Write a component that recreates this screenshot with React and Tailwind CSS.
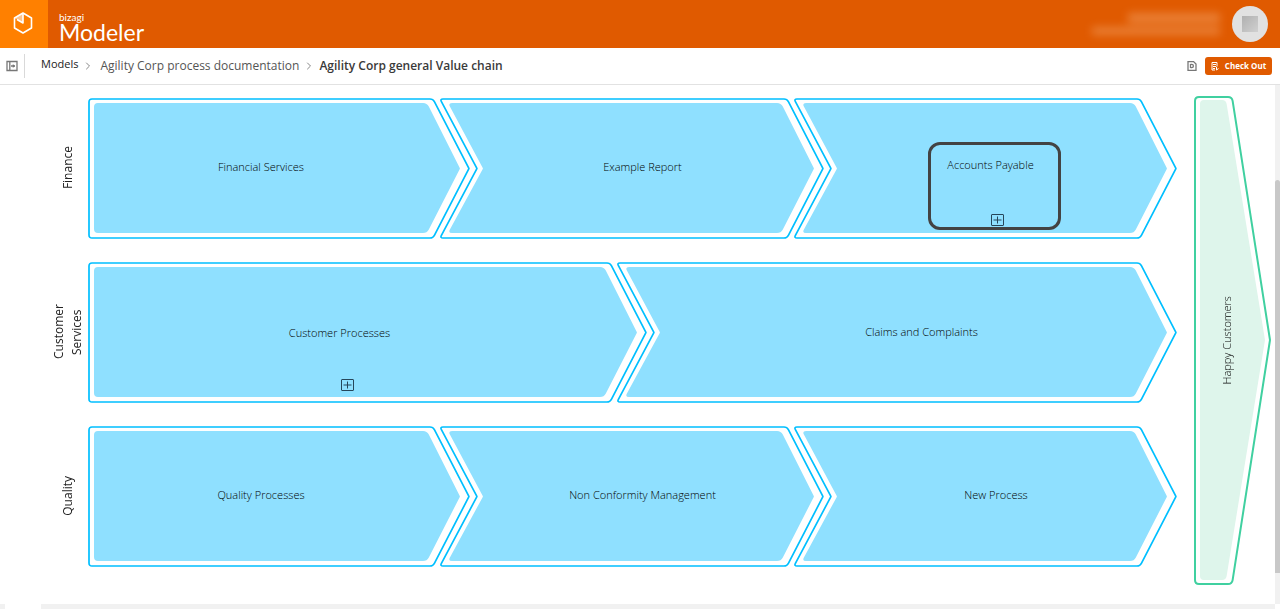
import React from 'react';
import { ChevronRight } from 'lucide-react';

const CAP = 37;

// Positions are in canvas pixels, measured from the top left of the drawing area
const processes = [
  { id: 'financial', label: 'Financial Services', x: 88, y: 13, w: 382 },
  { id: 'report', label: 'Example Report', x: 441, y: 13, w: 383, notched: true },
  { id: 'payables', label: '', x: 795, y: 13, w: 382, notched: true },
  { id: 'customer', label: 'Customer Processes', x: 88, y: 177, w: 559, pad: 'pr-14 pt-0.5', expandable: true },
  { id: 'claims', label: 'Claims and Complaints', x: 618, y: 177, w: 559, pad: 'pl-12', notched: true },
  { id: 'quality', label: 'Quality Processes', x: 88, y: 341, w: 382 },
  { id: 'nonconformity', label: 'Non Conformity Management', x: 441, y: 341, w: 383, notched: true },
  { id: 'new', label: 'New Process', x: 795, y: 341, w: 382, notched: true },
];

const lanes = [
  { id: 'finance', label: 'Finance', y: 13 },
  { id: 'services', label: 'Customer Services', y: 177 },
  { id: 'quality', label: 'Quality', y: 341 },
];

// Polygon path with softened corners
function roundedPath(points, r) {
  const n = points.length;
  const toward = (a, b, d) => {
    const len = Math.hypot(b[0] - a[0], b[1] - a[1]);
    return [a[0] + ((b[0] - a[0]) * d) / len, a[1] + ((b[1] - a[1]) * d) / len];
  };
  return (
    points
      .map((p, i) => {
        const radius = p[2] === 0 ? 0.5 : r;
        const start = toward(p, points[(i + n - 1) % n], radius);
        const end = toward(p, points[(i + 1) % n], radius);
        return `${i ? 'L' : 'M'}${start} Q${p[0]},${p[1]} ${end}`;
      })
      .join(' ') + 'Z'
  );
}

function chevron(w, h, notched) {
  const mid = h / 2;
  const outerLeft = notched ? -1 : 1;
  const innerLeft = notched ? 7 : 6;
  const outer = [[outerLeft, 1], [w - CAP, 1], [w - 1, mid, 0], [w - CAP, h - 1], [outerLeft, h - 1]];
  const inner = [[innerLeft, 5], [w - CAP - 6, 5], [w - 10, mid, 0], [w - CAP - 6, h - 6], [innerLeft, h - 6]];
  if (notched) {
    outer.push([CAP - 1, mid, 0]);
    inner.push([CAP + 5, mid, 0]);
  }
  return { outer, inner };
}

function PlusBox() {
  return (
    <svg width="13" height="12" viewBox="0 0 13 12" fill="none" stroke="#26465a" aria-hidden="true">
      <rect x="0.5" y="0.5" width="12" height="11" rx="0.5" />
      <path d="M6.5 2.5v7M2.5 6h8" />
    </svg>
  );
}

function Process({ label, x, y, w, notched, pad, expandable }) {
  const { outer, inner } = chevron(w, 141, notched);
  const padding = pad || (notched ? 'pl-5 pb-0.5' : 'pr-9 pb-0.5');
  return (
    <div className="absolute h-[141px]" style={{ left: x, top: y, width: w }}>
      <svg className="absolute inset-0 overflow-visible" width={w} height="141" aria-hidden="true">
        <path d={roundedPath(outer, 3)} fill="#fff" stroke="#00bfff" strokeWidth="1.7" />
        <path d={roundedPath(inner, 4)} fill="#8fe0ff" />
      </svg>
      <div className={`relative h-full flex items-center justify-center ${padding}`}>
        <span className="text-[11px] font-light text-black">{label}</span>
      </div>
      {expandable && (
        <div className="absolute bottom-3 left-[253px]">
          <PlusBox />
        </div>
      )}
    </div>
  );
}

function Header() {
  return (
    <header className="h-12 bg-[#e05a00] flex items-stretch text-white">
      <a href="#home" aria-label="Home" className="w-12 bg-[#ff8000] flex items-center justify-center pr-0.5 pb-0.5">
        <svg width="20" height="22" viewBox="0 0 20 22" fill="none" stroke="#fff" strokeWidth="1.6" strokeLinejoin="round" aria-hidden="true">
          <path d="M10 1v10L1.500 6z" fill="#ffc48c" stroke="none" />
          <path d="M10 1l8.500 5v10L10 21l-8.500-5V6z" />
          <path d="M10 1v10L4 7.500" />
        </svg>
      </a>
      <div className="flex flex-col pl-[11px] pt-3 font-['Lato',sans-serif]">
        <span className="text-[10px] leading-[10px]">bizagi</span>
        <span className="text-[23px] leading-5">Modeler</span>
      </div>
      <div className="ml-auto flex items-center gap-3 pr-3">
        <div className="flex flex-col items-end gap-1 blur-[4px] opacity-50" aria-hidden="true">
          <span className="w-23 h-2.5 bg-[#f3a56c]" />
          <span className="w-32 h-2 bg-[#f3a56c]" />
        </div>
        <div className="size-9 rounded-full bg-[#e1e1e1] flex items-center justify-center">
          <span className="size-4 bg-linear-to-br from-[#b0b0b0] to-[#d0d0d0]" />
        </div>
      </div>
    </header>
  );
}

function Toolbar() {
  return (
    <div className="h-[37px] border-b border-[#e2e2e2] flex items-center text-xs text-[#555]">
      <button type="button" aria-label="Toggle panel" className="h-6 w-[25px] pl-1.5 border-r border-[#d9d9d9]">
        <svg width="12" height="12" viewBox="0 0 12 12" fill="none" stroke="#777" strokeWidth="1.3" aria-hidden="true">
          <path d="M1 1.500h10v9H1zM3.800 1.500v9M5 6h4" />
          <path d="M6.800 4L9 6 6.800 8z" fill="#777" stroke="none" />
        </svg>
      </button>
      <nav aria-label="Breadcrumb" className="flex items-center pl-4">
        <a href="#models" className="text-[11px] text-[#222] pb-1">Models</a>
        <ChevronRight className="size-3 ml-1 mr-1.5 text-[#888]" />
        <a href="#documentation">Agility Corp process documentation</a>
        <ChevronRight className="size-3 mx-1 text-[#888]" />
        <span className="font-semibold text-[#3a3a3a]">Agility Corp general Value chain</span>
      </nav>
      <div className="ml-auto flex items-center gap-2 pr-2">
        <button type="button" aria-label="Document properties">
          <svg width="10" height="10" viewBox="0 0 10 10" fill="none" stroke="#777" strokeWidth="1.3" aria-hidden="true">
            <path d="M1 .6h5.500L9 3v6.400H1zM3.500 3v4M3.500 3.300h1.200a1.700 1.700 0 010 3.400H3.500" />
          </svg>
        </button>
        <button type="button" className="h-[18px] w-[67px] rounded-[3px] bg-[#e05a00] text-white text-[8px] font-bold flex items-center justify-center gap-1.5">
          <svg width="8" height="9" viewBox="0 0 8 9" fill="none" stroke="#fff" aria-hidden="true">
            <path d="M1 .5h5v4M1 .5v7.500h3M2 2.500h3M2 4.500h3M2 6.500h2M5.500 5v3l2-1.500" />
          </svg>
          Check Out
        </button>
      </div>
    </div>
  );
}

function Canvas() {
  const outer = [[1, 1], [38, 1], [76, 244, 0], [38, 488], [1, 488]];
  const inner = [[6, 4], [32, 4], [71, 244, 0], [32, 484], [6, 484]];
  return (
    <main className="relative h-[519px] overflow-hidden">
      {lanes.map(lane => (
        <div key={lane.id} className="absolute left-[49px] w-[38px] h-[141px] flex items-center justify-center pb-0.5" style={{ top: lane.y }}>
          <span className="[writing-mode:vertical-rl] rotate-180 max-h-20 text-center text-xs font-medium leading-[18px] text-[#222]">
            {lane.label}
          </span>
        </div>
      ))}

      {processes.map(process => (
        <Process key={process.id} {...process} />
      ))}

      {/* Collapsed task sitting on the third finance process */}
      <div className="absolute left-[928px] top-[57px] w-[133px] h-[88px] border-3 border-[#434343] rounded-xl flex flex-col items-center justify-between pt-3 pb-px">
        <span className="text-[11px] font-light text-black pr-2">Accounts Payable</span>
        <div className="pl-1.5">
          <PlusBox />
        </div>
      </div>

      <div className="absolute left-[1194px] top-[11px] w-[77px] h-[489px] flex items-center justify-center pr-2.5">
        <svg className="absolute inset-0" width="77" height="489" aria-hidden="true">
          <path d={roundedPath(outer, 4)} fill="#fff" stroke="#40d0a0" strokeWidth="2" />
          <path d={roundedPath(inner, 4)} fill="#def5eb" />
        </svg>
        <span className="relative [writing-mode:vertical-rl] rotate-180 text-[11px] font-light text-black">Happy Customers</span>
      </div>

      {/* Vertical scroll bar */}
      <div className="absolute right-0 inset-y-0 w-[5px] bg-[#f1f1f1] pt-[95px]">
        <div className="h-[393px] rounded-t-sm bg-[#c8c8c8]" />
      </div>
    </main>
  );
}

export default function App() {
  return (
    <div className="min-h-screen bg-white font-['Open_Sans',sans-serif] overflow-hidden">
      <Header />
      <Toolbar />
      <Canvas />
      <div className="h-[5px] flex justify-between pr-[5px]">
        <div className="w-[5px] bg-[#f1f1f1]" />
        <div className="flex-1 ml-9 bg-[#f1f1f1]" />
      </div>
    </div>
  );
}
